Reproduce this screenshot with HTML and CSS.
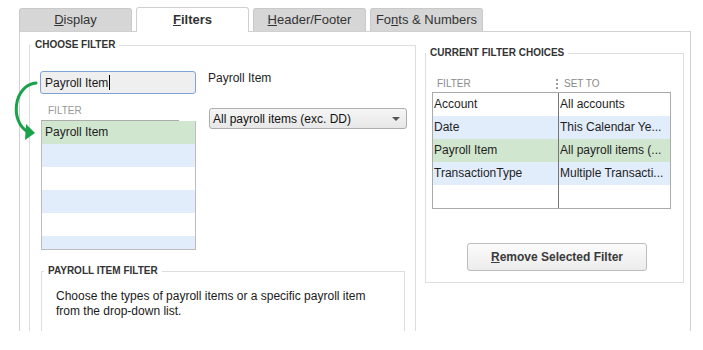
FILE: index.html
```html
<!DOCTYPE html>
<html lang="en">
<head>
  <meta charset="UTF-8" />
  <title>Modify Report - Filters</title>
  <link rel="stylesheet" href="styles.css">
</head>
<body>
  <div class="window">
    <div class="tabs">
      <div class="tab"><u>D</u>isplay</div>
      <div class="tab active"><u>F</u>ilters</div>
      <div class="tab"><u>H</u>eader/Footer</div>
      <div class="tab">Fo<u>n</u>ts &amp; Numbers</div>
    </div>

    <div class="panel">
      <fieldset class="group choose">
        <legend>Choose Filter</legend>
        <div class="choose-body">
          <div class="choose-row">
            <div class="filter-col">
              <div class="search">Payroll Item<span class="caret"></span></div>
              <div class="list-head">Filter</div>
              <div class="filter-list">
                <div class="row selected">Payroll Item</div>
                <div class="row alt"></div>
                <div class="row"></div>
                <div class="row alt"></div>
                <div class="row"></div>
                <div class="row alt"></div>
              </div>
            </div>
            <div class="value-col">
              <div class="value-label">Payroll Item</div>
              <div class="dropdown">
                <span>All payroll items (exc. DD)</span>
                <span class="dropdown-arrow"></span>
              </div>
            </div>
          </div>

          <fieldset class="group help">
            <legend>Payroll Item Filter</legend>
            <p>Choose the types of payroll items or a specific payroll item from the drop-down list.</p>
          </fieldset>
        </div>
      </fieldset>

      <fieldset class="group current">
        <legend>Current Filter Choices</legend>
        <div class="current-head">
          <span class="col-filter">Filter</span>
          <span class="col-sep"></span>
          <span class="col-set">Set To</span>
        </div>
        <div class="choices">
          <div class="choice"><span>Account</span><span>All accounts</span></div>
          <div class="choice alt"><span>Date</span><span>This Calendar Ye...</span></div>
          <div class="choice selected"><span>Payroll Item</span><span>All payroll items (...</span></div>
          <div class="choice alt"><span>TransactionType</span><span>Multiple Transacti...</span></div>
          <div class="choice"><span></span><span></span></div>
        </div>
        <button class="remove-btn"><u>R</u>emove Selected Filter</button>
      </fieldset>
    </div>

    <!-- green arrow from search box down to the list -->
    <svg class="jump-arrow" width="32" height="66" viewBox="0 0 32 66">
      <path d="M28 5 C 6 7, 1 43, 20 54" fill="none" stroke="#1aa14b" stroke-width="3" stroke-linecap="round" />
      <polygon points="18,46 27,55 17,62" fill="#1aa14b" />
    </svg>
  </div>
</body>
</html>
```

FILE: styles.css
```css
body {
  margin: 0;
  background: #fff;
  font-family: "Liberation Sans", Arial, sans-serif;
  font-size: 12px;
  color: #1e1e1e;
}
u {
  text-decoration: underline;
}

.window {
  position: relative;
  width: 703px;
  height: 350px;
}

/* tabs */
.tabs {
  display: flex;
  align-items: flex-end;
  gap: 4px;
  height: 24px;
  padding: 7px 0 0 19px;
}
.tab {
  box-sizing: border-box;
  width: 113px;
  height: 23px;
  background: #d6d6d6;
  border: 1px solid #c9c9c9;
  border-bottom: none;
  border-radius: 3px 3px 0 0;
  font-size: 13px;
  line-height: 22px;
  text-align: center;
  color: #333;
}
.tab.active {
  position: relative;
  z-index: 1;
  height: 25px;
  margin-bottom: -1px;
  background: #fff;
  border-color: #cfcfcf;
  font-weight: bold;
  line-height: 23px;
}

/* main panel */
.panel {
  display: flex;
  align-items: flex-start;
  box-sizing: border-box;
  width: 672px;
  height: 300px;
  margin-left: 19px;
  padding: 7px 0 0 9px;
  border: 1px solid #d0d0d0;
  border-bottom: none;
  overflow: hidden;
}

.group {
  margin: 0;
  padding: 0;
  min-width: 0;
  box-sizing: border-box;
  border: 1px solid #dddddd;
}
.group legend {
  margin-left: 1px;
  padding: 0 4px;
  font-size: 10px;
  line-height: 12px;
  font-weight: bold;
  text-transform: uppercase;
  color: #333;
}

.choose {
  width: 387px;
  height: 330px;
  flex-shrink: 0;
}
.choose-body {
  padding: 20px 0 0 10px;
}
.choose-row {
  display: flex;
  gap: 12px;
}

.filter-col {
  width: 156px;
}
.search {
  display: flex;
  align-items: center;
  box-sizing: border-box;
  height: 23px;
  padding-left: 4px;
  background: #efefef;
  border: 1px solid #7fa3d9;
  border-radius: 3px;
  color: #1a1a1a;
}
.caret {
  display: inline-block;
  width: 1px;
  height: 15px;
  margin-left: 1px;
  background: #000;
}
.list-head {
  width: 131px;
  margin: 11px 0 0 1px;
  padding: 0 0 3px 7px;
  border-bottom: 1px solid #ababab;
  font-size: 10px;
  line-height: 12px;
  text-transform: uppercase;
  color: #999;
}
.filter-list {
  box-sizing: border-box;
  width: 155px;
  height: 129px;
  margin-left: 1px;
  border: 1px solid #bdbdbd;
  border-top: none;
  overflow: hidden;
}
.row {
  height: 23px;
  padding-left: 3px;
  line-height: 23px;
  background: #fff;
}
.row.alt {
  background: #e2edfc;
}
.row.selected {
  background: #d1e6cf;
  color: #222;
}

.value-col {
  width: 200px;
}
.value-label {
  line-height: 14px;
}
.dropdown {
  display: flex;
  align-items: center;
  justify-content: space-between;
  box-sizing: border-box;
  width: 198px;
  height: 21px;
  margin: 23px 0 0 1px;
  padding: 0 6px 0 3px;
  background: linear-gradient(#f6f6f6, #e7e7e7);
  border: 1px solid #adadad;
  border-radius: 3px;
  color: #111;
}
.dropdown-arrow {
  width: 0;
  height: 0;
  border-left: 4px solid transparent;
  border-right: 4px solid transparent;
  border-top: 4px solid #555;
}

.help {
  width: 364px;
  height: 80px;
  margin: 15px 0 0 1px;
}
.help legend {
  margin-left: 2px;
}
.help p {
  margin: 12px 0 0 14px;
  width: 330px;
  line-height: 15px;
  color: #1a1a1a;
}

/* current filters */
.current {
  width: 259px;
  height: 236px;
  margin: 8px 0 0 9px;
  flex-shrink: 0;
}
.current legend {
  margin-left: 0;
}
.current-head {
  display: flex;
  align-items: center;
  height: 16px;
  margin: 17px 0 0 6px;
  font-size: 10px;
  line-height: 12px;
  text-transform: uppercase;
  color: #8a8a8a;
}
.col-filter {
  width: 119px;
  padding-left: 5px;
}
.col-sep {
  width: 0;
  height: 10px;
  border-left: 2px dotted #9a9a9a;
}
.col-set {
  padding-left: 6px;
}
.choices {
  box-sizing: border-box;
  width: 239px;
  margin: 0 0 0 6px;
  border: 1px solid #aaaaaa;
}
.choice {
  display: flex;
  height: 23px;
  line-height: 23px;
  background: #fff;
}
.choice.alt {
  background: #e2edfc;
}
.choice.selected {
  background: #d1e6cf;
}
.choice span {
  overflow: hidden;
  white-space: nowrap;
}
.choice span:first-child {
  width: 124px;
  padding-left: 1px;
  border-right: 1px solid #777;
}
.choice span:last-child {
  flex: 1;
  padding-left: 1px;
}

.remove-btn {
  display: block;
  width: 180px;
  height: 28px;
  margin: 34px 0 0 41px;
  padding: 0;
  background: linear-gradient(#fbfbfb, #ececec);
  border: 1px solid #bcbcbc;
  border-radius: 3px;
  font-family: "Liberation Sans", Arial, sans-serif;
  font-size: 12px;
  font-weight: bold;
  color: #3a3a3a;
}

.jump-arrow {
  position: absolute;
  left: 8px;
  top: 78px;
}
```
